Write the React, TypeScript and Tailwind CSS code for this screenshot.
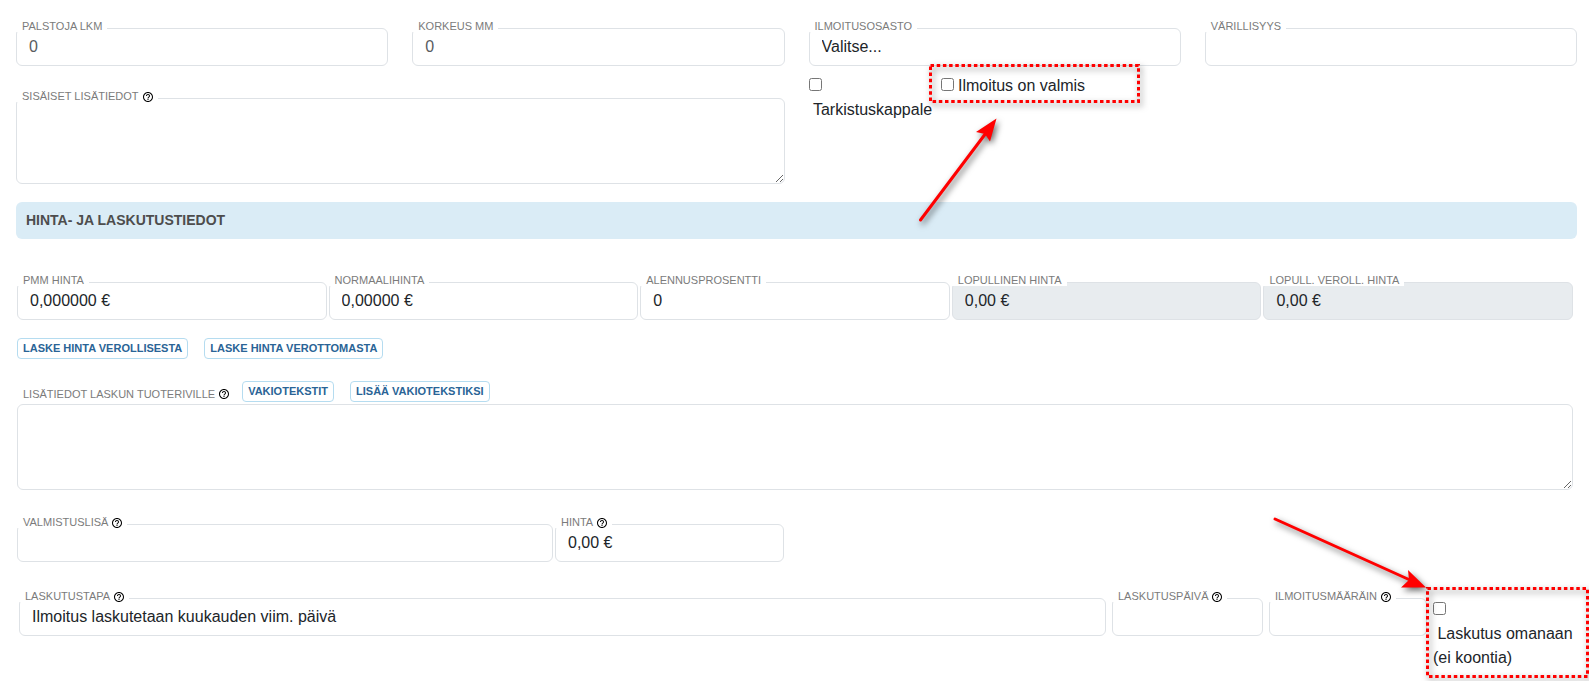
import React, { useId, useState } from 'react';
import clsx from 'clsx';
import { MdHelpOutline } from 'react-icons/md';

const control =
  'block h-[38px] w-full appearance-none rounded-md border border-[#dee2e6] bg-white px-3 text-base text-[#212529] outline-none placeholder-[#595c5f] focus:border-sky-400 disabled:bg-[#e8ecef] disabled:opacity-100';

interface FieldProps {
  label: string;
  help?: boolean;
  className?: string;
  children: (id: string) => React.ReactNode;
}

// Outlined field with the caption sitting on the top border
const Field: React.FC<FieldProps> = ({ label, help, className, children }) => {
  const id = useId();
  return (
    <div className={clsx('relative', className)}>
      {children(id)}
      <label
        htmlFor={id}
        className={clsx(
          'absolute -top-2 left-0 flex h-3 items-center bg-white pl-1.5 text-[11px] leading-3 whitespace-nowrap text-[#7b7b7b] uppercase',
          help ? 'pr-1' : 'pr-[5px]'
        )}
      >
        {label}
        {help && <HelpIcon />}
      </label>
    </div>
  );
};

const HelpIcon: React.FC = () => <MdHelpOutline size={12} className="mt-px ml-[3px] shrink-0 text-black" />;

interface TextFieldProps {
  label: string;
  value?: string;
  placeholder?: string;
  help?: boolean;
  disabled?: boolean;
  className?: string;
}

const TextField: React.FC<TextFieldProps> = ({ label, value = '', placeholder, help, disabled, className }) => {
  const [text, setText] = useState(value);
  return (
    <Field label={label} help={help} className={className}>
      {(id) => (
        <input
          id={id}
          type="text"
          value={text}
          placeholder={placeholder}
          disabled={disabled}
          onChange={(e) => setText(e.target.value)}
          className={control}
        />
      )}
    </Field>
  );
};

const SelectField: React.FC<{ label: string; options: string[]; help?: boolean; className?: string }> = ({
  label,
  options,
  help,
  className,
}) => (
  <Field label={label} help={help} className={className}>
    {(id) => (
      <select id={id} className={control}>
        {options.map((o) => (
          <option key={o}>{o}</option>
        ))}
      </select>
    )}
  </Field>
);

const SmallButton: React.FC<{ children: React.ReactNode }> = ({ children }) => (
  <button
    type="button"
    className="h-[21px] rounded border border-[#b5dcf0] bg-white px-[5px] pb-0.5 text-[11px] leading-3 font-bold whitespace-nowrap text-[#2a6496] uppercase hover:bg-sky-50"
  >
    {children}
  </button>
);

// Red dotted frame drawn around a highlighted control
const Highlight: React.FC<{ className: string }> = ({ className }) => (
  <svg className={clsx('pointer-events-none absolute overflow-visible drop-shadow-[2px_3px_3px_rgba(0,0,0,0.5)]', className)}>
    <rect
      x="1.5"
      y="1.5"
      className="h-[calc(100%-3px)] w-[calc(100%-3px)]"
      fill="none"
      stroke="#f00"
      strokeWidth="3"
      strokeDasharray="3.500 2.700"
    />
  </svg>
);

const textarea =
  'block h-[86px] w-full resize rounded-md border border-[#dee2e6] bg-white px-3 py-1.5 text-base text-[#212529] outline-none focus:border-sky-400';

export default function App() {
  return (
    <form className="overflow-x-hidden bg-white pt-7 pb-3 font-['Liberation_Sans',Arial,sans-serif] text-base leading-6 text-[#212529]">
      <div className="grid grid-cols-2 gap-6 pr-3 pl-4">
        <div>
          <div className="grid grid-cols-2 gap-6">
            <TextField label="Palstoja lkm" placeholder="0" />
            <TextField label="Korkeus mm" placeholder="0" />
          </div>
          <Field label="Sisäiset lisätiedot" help className="mt-8">
            {(id) => <textarea id={id} className={textarea} />}
          </Field>
        </div>

        <div>
          <div className="grid grid-cols-2 gap-6">
            <SelectField label="Ilmoitusosasto" options={['Valitse...']} />
            <SelectField label="Värillisyys" options={['']} />
          </div>
          <div className="mt-2 flex items-start">
            <label className="w-[132px]">
              <input type="checkbox" className="size-[13px]" />
              <span className="block">&nbsp;Tarkistuskappale</span>
            </label>
            <div className="relative w-[200px]">
              <label>
                <input type="checkbox" className="size-[13px]" />
                <span>&nbsp;Ilmoitus on valmis</span>
              </label>
              <Highlight className="-top-2.5 -left-3 h-[39px] w-[211px]" />
              {/* Arrow pointing at the ready checkbox */}
              <svg
                width="80"
                height="104"
                viewBox="0 0 80 104"
                className="pointer-events-none absolute top-11 -left-[23px] overflow-visible drop-shadow-[2px_3px_3px_rgba(0,0,0,0.6)]"
              >
                <path d="M2.5 102 68 15" stroke="#f00" strokeWidth="3" strokeLinecap="round" />
                <path d="M78.500 .5 58 14 67 16 72 23.500Z" fill="#f00" />
              </svg>
            </div>
          </div>
        </div>
      </div>

      <h2 className="mt-[18px] mr-3 ml-4 flex h-[37px] items-center rounded-md bg-[#daecf6] px-2.5 pb-0.5 text-sm font-bold text-[#4d4d4d] uppercase">
        Hinta- ja laskutustiedot
      </h2>

      <div className="mt-[43px] mr-4 ml-[17px]">
        <div className="grid grid-cols-5 gap-0.5">
          <TextField label="PMM hinta" value="0,000000 €" />
          <TextField label="Normaalihinta" value="0,00000 €" />
          <TextField label="Alennusprosentti" value="0" />
          <TextField label="Lopullinen hinta" value="0,00 €" disabled />
          <TextField label="Lopull. veroll. hinta" value="0,00 €" disabled />
        </div>

        <div className="mt-[18px] flex gap-4">
          <SmallButton>Laske hinta verollisesta</SmallButton>
          <SmallButton>Laske hinta verottomasta</SmallButton>
        </div>

        <div className="mt-[22px] flex items-start">
          <label htmlFor="row-notes" className="mt-1.5 mr-3 flex items-center pl-1.5 text-[11px] leading-3 text-[#7b7b7b] uppercase">
            Lisätiedot laskun tuoteriville
            <HelpIcon />
          </label>
          <div className="flex gap-4">
            <SmallButton>Vakiotekstit</SmallButton>
            <SmallButton>Lisää vakiotekstiksi</SmallButton>
          </div>
        </div>
        <textarea id="row-notes" className={clsx(textarea, 'mt-0.5')} />

        <div className="mt-[34px] flex w-[767px] gap-0.5">
          <SelectField label="Valmistuslisä" help options={['']} className="flex-1" />
          <TextField label="Hinta" help value="0,00 €" className="w-[229px]" />
        </div>
      </div>

      <div className="mt-[35px] ml-[19px] flex items-start gap-1.5">
        <SelectField
          label="Laskutustapa"
          help
          options={['Ilmoitus laskutetaan kuukauden viim. päivä']}
          className="mt-px flex-1"
        />
        <TextField label="Laskutuspäivä" help className="mt-px w-[151px]" />
        <TextField label="Ilmoitusmääräin" help className="mt-px w-[158px]" />
        <div className="relative w-[156px]">
          <label className="block">
            <input type="checkbox" className="mt-[5px] mb-[7px] block size-[13px]" />
            <span className="block pr-3">&nbsp;Laskutus omanaan (ei koontia)</span>
          </label>
          <Highlight className="-top-2.5 -left-[7px] h-[91px] w-[163px]" />
          {/* Arrow pointing at the separate invoicing checkbox */}
          <svg
            width="156"
            height="74"
            viewBox="0 0 156 74"
            className="pointer-events-none absolute -top-[81px] -left-[160px] overflow-visible drop-shadow-[2px_3px_3px_rgba(0,0,0,0.6)]"
          >
            <path d="M2 3 137 64" stroke="#f00" strokeWidth="3" strokeLinecap="round" />
            <path d="M153 71.500 135 54 136 64 128 71.500Z" fill="#f00" />
          </svg>
        </div>
      </div>
    </form>
  );
}
